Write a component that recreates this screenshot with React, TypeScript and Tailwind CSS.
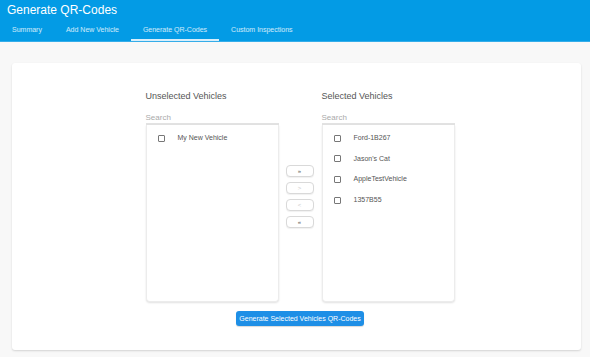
import React from 'react';

const tabs = ['Summary', 'Add New Vehicle', 'Generate QR-Codes', 'Custom Inspections'];
const unselected = ['My New Vehicle'];
const selected = ['Ford-1B267', "Jason's Cat", 'AppleTestVehicle', '1357B55'];

const VehicleList: React.FC<{ title: string; items: string[] }> = ({ title, items }) => (
  <div className="flex flex-col w-[133px]">
    <div className="text-[9px] leading-[12px] text-[#555]">{title}</div>
    <div className="mt-[11px] h-[12px] text-[8px] leading-[10px] text-[#aaa] border-b-2 border-[#e2e2e2]">
      Search
    </div>
    <div className="h-[177px] pt-[3px] bg-white border border-t-0 border-[#ececec] rounded-b-[4px] shadow-[0_1px_2px_rgba(0,0,0,0.12)]">
      {items.map((item) => (
        <div key={item} className="flex items-center h-[20.6px] pl-[11px]">
          <span className="w-[7px] h-[7px] border border-[#777] rounded-[1px]" />
          <span className="ml-[13px] text-[7px] text-[#555]">{item}</span>
        </div>
      ))}
    </div>
  </div>
);

const MoveButton: React.FC<{ label: string; disabled?: boolean }> = ({ label, disabled }) => (
  <div
    className={`shrink-0 w-[28px] h-[12px] flex items-center justify-center text-[6px] leading-none rounded-[4px] bg-white border border-[#d9d9d9] shadow-[0_1px_1px_rgba(0,0,0,0.06)] ${
      disabled ? 'text-[#ccc]' : 'text-[#555]'
    }`}
  >
    {label}
  </div>
);

export default function App() {
  return (
    <div className="w-[590px] h-[357px] bg-[#f8f8f8] overflow-hidden font-['Liberation_Sans',Arial,sans-serif]">
      {/* Header */}
      <div className="bg-[#039be5] border-b border-[#35ade9]">
        <div className="h-[22px] pl-[7px] pt-[4px] text-[12px] leading-[12px] text-white">Generate QR-Codes</div>
        <div className="flex h-[19px]">
          {tabs.map((tab, i) => (
            <div
              key={tab}
              className={`px-[12px] flex items-center text-[7px] text-white/80 ${
                i === 2 ? 'border-b-2 border-[#d8eefb]' : 'border-b-2 border-transparent'
              }`}
            >
              {tab}
            </div>
          ))}
        </div>
      </div>

      {/* Card */}
      <div className="mt-[21px] ml-[12px] mr-[9px] h-[287px] bg-white rounded-[3px] shadow-[0_1px_2px_rgba(0,0,0,0.15)] pt-[27px] flex flex-col items-center">
        <div className="flex flex-col items-center ml-[7px]">
          <div className="flex items-center">
            <VehicleList title="Unselected Vehicles" items={unselected} />
            <div className="flex flex-col gap-[5px] ml-[7px] mr-[8px]">
              <MoveButton label="»" />
              <MoveButton label=">" disabled />
              <MoveButton label="<" disabled />
              <MoveButton label="«" />
            </div>
            <VehicleList title="Selected Vehicles" items={selected} />
          </div>
          <button className="mt-[9px] w-[128px] h-[15px] rounded-[3px] bg-[#1e8fe6] text-white text-[7px] font-normal leading-none shadow-[0_1px_1px_rgba(0,0,0,0.15)]">
            Generate Selected Vehicles QR-Codes
          </button>
        </div>
      </div>
    </div>
  );
}
